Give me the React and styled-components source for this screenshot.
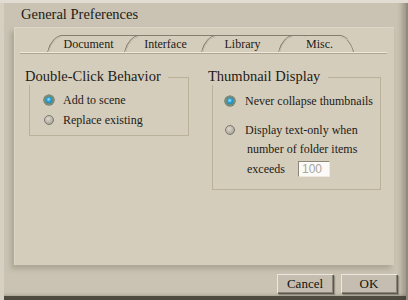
import React from 'react';
import styled, { createGlobalStyle, css } from 'styled-components';

const GlobalStyle = createGlobalStyle`
  body {
    margin: 0;
    background: #cac3b3;
  }
`;

const panelColor = '#d5cdbb';

const Frame = styled.div`
  width: 408px;
  height: 300px;
  box-sizing: border-box;
  background: #cac3b3;
  box-shadow:
    inset 0 3px 0 #e1ddd3,
    inset 4px 0 0 #d6d0c3,
    inset -2px 0 0 #8f8a7d,
    inset -9px 0 5px -3px rgba(60, 55, 40, 0.3),
    inset 0 -4px 0 #4f4b41,
    inset 0 -7px 3px -2px rgba(60, 55, 40, 0.25);
  display: flex;
  flex-direction: column;
  font-family: "Liberation Serif", "Times New Roman", serif;
  color: #1d1b17;
`;

const Title = styled.div`
  height: 27px;
  box-sizing: border-box;
  padding: 6px 0 0 21px;
  font-size: 14.5px;
  line-height: 17px;
`;

const Panel = styled.div`
  margin-left: 14px;
  width: 380px;
  height: 238px;
  background: ${panelColor};
  box-shadow: -3px 4px 5px rgba(70, 60, 40, 0.22), inset 1px 1px 0 #ddd6c6;
  display: flex;
  flex-direction: column;
`;

const TabBar = styled.div`
  margin: 8px 7px 0 6px;
  height: 17px;
  padding-left: 27px;
  display: flex;
  border-bottom: 1px solid #efe9dd;
  box-shadow: 0 1px 0 #aea590;
`;

const tabEdge = css`
  content: '';
  position: absolute;
  top: 0;
  bottom: 0;
  background: ${panelColor};
  border-top: 2px groove #d6cebb;
`;

const Tab = styled.div`
  position: relative;
  width: 77px;
  height: 17px;
  padding-left: 6px;
  box-sizing: border-box;
  text-align: center;
  font-size: 12px;
  line-height: 18px;

  &::before {
    ${tabEdge}
    left: 0;
    right: ${(p) => (p.$last ? '20px' : '-18px')};
    border-left: 2px groove #d6cebb;
    border-top-left-radius: 11px 16px;
    transform: skewX(-14deg);
    transform-origin: bottom left;
  }

  ${(p) =>
    p.$last &&
    css`
      &::after {
        ${tabEdge}
        left: 40%;
        right: 0;
        border-right: 2px groove #d6cebb;
        border-top-right-radius: 11px 16px;
        transform: skewX(14deg);
        transform-origin: bottom right;
      }
    `}

  span {
    position: relative;
    z-index: 1;
  }
`;

const Body = styled.div`
  display: flex;
  align-items: flex-start;
  gap: 23px;
  padding: 16px 0 0 15px;
`;

const Group = styled.fieldset`
  margin: 0;
  min-width: 0;
  width: ${(p) => p.$width}px;
  box-sizing: border-box;
  border: 1px solid #bbb19b;
  padding: 0 0 ${(p) => p.$bottom}px ${(p) => p.$left}px;
`;

const Legend = styled.legend`
  margin-left: ${(p) => -5 - p.$left}px;
  padding: 0 ${(p) => p.$gap}px 0 0;
  font-size: 14.5px;
  line-height: 16px;
  position: relative;
  top: -1px;
`;

const Option = styled.div`
  display: flex;
  align-items: center;
  gap: ${(p) => p.$gap}px;
  height: 20px;
  font-size: 12px;
  line-height: 20px;
  margin-top: ${(p) => p.$top || 0}px;
`;

const Radio = styled.span`
  width: 10px;
  height: 10px;
  box-sizing: border-box;
  border-radius: 50%;
  flex: none;
  ${(p) =>
    p.$on
      ? css`
          border: 2px solid #6c8a7b;
          background: radial-gradient(circle at 45% 40%, #a4e6ff 0, #22a2dc 45%, #0f76ad 100%);
          box-shadow: 0 0 0 0.6px #465a50;
        `
      : css`
          border: 1px solid #7b776d;
          background: radial-gradient(circle at 40% 35%, #ddd9d0 0, #aca79c 75%);
        `}
`;

const Detail = styled.div`
  padding-left: ${(p) => p.$indent}px;
  font-size: 12px;
  line-height: ${(p) => p.$line}px;
  display: flex;
  align-items: center;
  gap: 13px;
`;

const NumberField = styled.div`
  width: 32px;
  height: 16px;
  box-sizing: border-box;
  background: #fbfaf6;
  border-top: 1px solid #8c8679;
  border-left: 1px solid #8c8679;
  border-right: 1px solid #ece8df;
  border-bottom: 1px solid #ece8df;
  padding-left: 3px;
  font-family: "Liberation Sans", Arial, sans-serif;
  font-size: 12px;
  line-height: 14px;
  color: #a9a6a0;
`;

const Footer = styled.div`
  display: flex;
  justify-content: flex-end;
  gap: 8px;
  padding: 9px 11px 0 0;
`;

const Button = styled.button`
  width: 56px;
  height: 19px;
  padding: 0;
  border: none;
  background: #c5beb0;
  box-shadow:
    inset 1px 1px 0 #ece8df,
    inset -1px -1px 0 #8a8578,
    1px 1px 0 #5b574d,
    2px 2px 1px rgba(0, 0, 0, 0.25);
  font-family: "Liberation Serif", "Times New Roman", serif;
  font-size: 13px;
  line-height: 19px;
  color: #111;
`;

const tabs = ['Document', 'Interface', 'Library', 'Misc.'];

export default function App() {
  return (
    <>
      <GlobalStyle />
      <Frame>
        <Title>General Preferences</Title>
        <Panel>
          <TabBar>
            {tabs.map((t, i) => (
              <Tab key={t} $last={i === tabs.length - 1}>
                <span>{t}</span>
              </Tab>
            ))}
          </TabBar>
          <Body>
            <Group $width={160} $left={14} $bottom={5}>
              <Legend $left={14} $gap={7}>Double-Click Behavior</Legend>
              <Option $gap={9} $top={5}>
                <Radio $on />
                Add to scene
              </Option>
              <Option $gap={9}>
                <Radio />
                Replace existing
              </Option>
            </Group>
            <Group $width={169} $left={12} $bottom={10}>
              <Legend $left={12} $gap={8}>Thumbnail Display</Legend>
              <Option $gap={10} $top={6}>
                <Radio $on />
                Never collapse thumbnails
              </Option>
              <Option $gap={10} $top={9}>
                <Radio />
                Display text-only when
              </Option>
              <Detail $indent={22} $line={19}>number of folder items</Detail>
              <Detail $indent={22} $line={20}>
                exceeds
                <NumberField>100</NumberField>
              </Detail>
            </Group>
          </Body>
        </Panel>
        <Footer>
          <Button>Cancel</Button>
          <Button>OK</Button>
        </Footer>
      </Frame>
    </>
  );
}
